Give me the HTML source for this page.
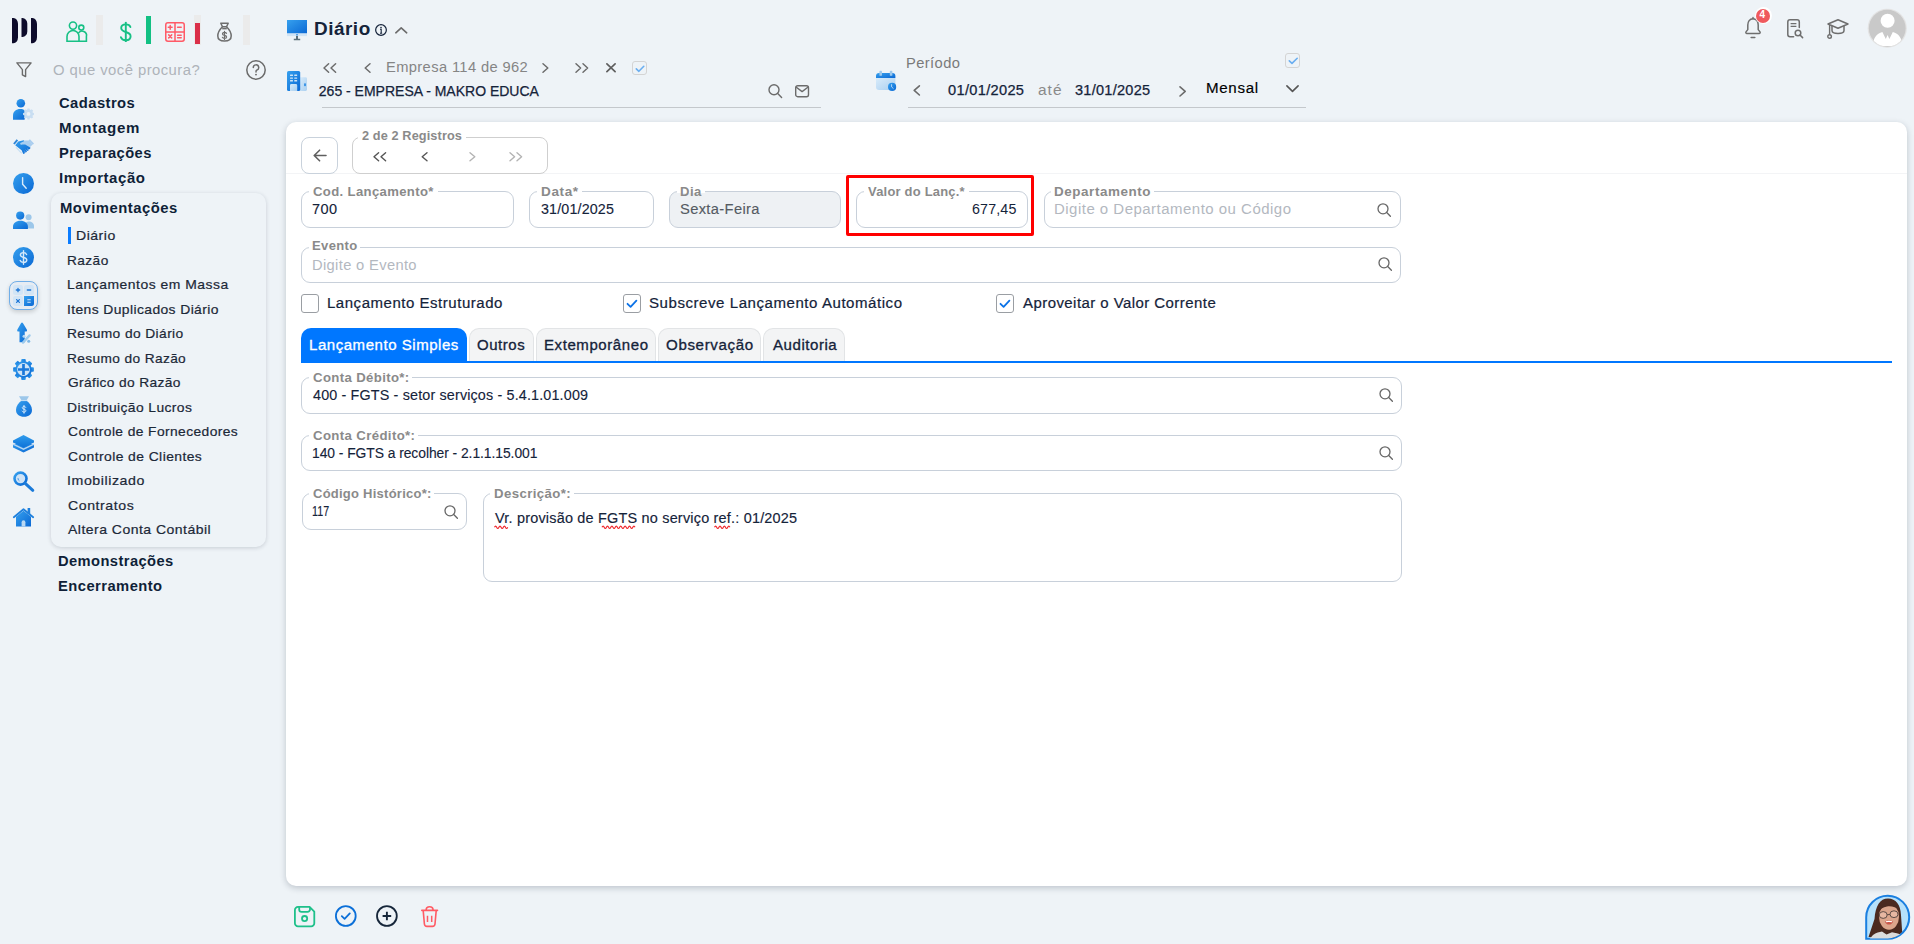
<!DOCTYPE html>
<html><head><meta charset="utf-8"><title>Diário</title>
<style>
html,body{margin:0;padding:0;}
body{width:1914px;height:944px;overflow:hidden;position:relative;background:#eef3f7;font-family:"Liberation Sans",sans-serif;}
.t{position:absolute;white-space:nowrap;}
.a{position:absolute;}
svg{position:absolute;overflow:visible;}
</style></head><body>
<div class="a" style="left:51px;top:192.5px;width:215px;height:354.5px;border-radius:10px;background:#eef3f7;box-shadow:0 1px 4px rgba(30,40,60,0.18);"></div><div class="t" style="left:52.70px;top:63.20px;font-size:14px;line-height:14px;font-weight:normal;color:#aeb3ba;letter-spacing:0.415px;font-family:'Liberation Sans';transform:scaleX(1.0611);transform-origin:0 0;">O que você procura?</div><div class="t" style="left:58.74px;top:96.10px;font-size:14px;line-height:14px;font-weight:bold;color:#0f1f38;letter-spacing:0.429px;font-family:'Liberation Sans';transform:scaleX(1.0536);transform-origin:0 0;">Cadastros</div><div class="t" style="left:58.56px;top:121.00px;font-size:14px;line-height:14px;font-weight:bold;color:#0f1f38;letter-spacing:0.686px;font-family:'Liberation Sans';transform:scaleX(1.0757);transform-origin:0 0;">Montagem</div><div class="t" style="left:58.58px;top:145.90px;font-size:14px;line-height:14px;font-weight:bold;color:#0f1f38;letter-spacing:0.390px;font-family:'Liberation Sans';transform:scaleX(1.0496);transform-origin:0 0;">Preparações</div><div class="t" style="left:58.56px;top:171.10px;font-size:14px;line-height:14px;font-weight:bold;color:#0f1f38;letter-spacing:0.543px;font-family:'Liberation Sans';transform:scaleX(1.0706);transform-origin:0 0;">Importação</div><div class="t" style="left:60.47px;top:201.00px;font-size:14px;line-height:14px;font-weight:bold;color:#0f1f38;letter-spacing:0.480px;font-family:'Liberation Sans';transform:scaleX(1.0589);transform-origin:0 0;">Movimentações</div><div class="t" style="left:58.38px;top:554.40px;font-size:14px;line-height:14px;font-weight:bold;color:#0f1f38;letter-spacing:0.401px;font-family:'Liberation Sans';transform:scaleX(1.0488);transform-origin:0 0;">Demonstrações</div><div class="t" style="left:58.38px;top:579.00px;font-size:14px;line-height:14px;font-weight:bold;color:#0f1f38;letter-spacing:0.427px;font-family:'Liberation Sans';transform:scaleX(1.0533);transform-origin:0 0;">Encerramento</div><div class="a" style="left:68px;top:227px;width:3px;height:17px;background:#0a7cff;"></div><div class="t" style="left:75.80px;top:229.00px;font-size:13px;line-height:13px;font-weight:normal;color:#1c2838;letter-spacing:0.480px;font-family:'Liberation Sans';transform:scaleX(1.0800);transform-origin:0 0;-webkit-text-stroke:0.2px currentColor;">Diário</div><div class="t" style="left:67.33px;top:253.50px;font-size:13px;line-height:13px;font-weight:normal;color:#1c2838;letter-spacing:0.425px;font-family:'Liberation Sans';transform:scaleX(1.0495);transform-origin:0 0;-webkit-text-stroke:0.2px currentColor;">Razão</div><div class="t" style="left:67.31px;top:278.00px;font-size:13px;line-height:13px;font-weight:normal;color:#1c2838;letter-spacing:0.480px;font-family:'Liberation Sans';transform:scaleX(1.0693);transform-origin:0 0;-webkit-text-stroke:0.2px currentColor;">Lançamentos em Massa</div><div class="t" style="left:67.32px;top:302.50px;font-size:13px;line-height:13px;font-weight:normal;color:#1c2838;letter-spacing:0.376px;font-family:'Liberation Sans';transform:scaleX(1.0669);transform-origin:0 0;-webkit-text-stroke:0.2px currentColor;">Itens Duplicados Diário</div><div class="t" style="left:67.32px;top:327.00px;font-size:13px;line-height:13px;font-weight:normal;color:#1c2838;letter-spacing:0.381px;font-family:'Liberation Sans';transform:scaleX(1.0590);transform-origin:0 0;-webkit-text-stroke:0.2px currentColor;">Resumo do Diário</div><div class="t" style="left:67.23px;top:351.50px;font-size:13px;line-height:13px;font-weight:normal;color:#1c2838;letter-spacing:0.373px;font-family:'Liberation Sans';transform:scaleX(1.0517);transform-origin:0 0;-webkit-text-stroke:0.2px currentColor;">Resumo do Razão</div><div class="t" style="left:67.66px;top:376.00px;font-size:13px;line-height:13px;font-weight:normal;color:#1c2838;letter-spacing:0.350px;font-family:'Liberation Sans';transform:scaleX(1.0554);transform-origin:0 0;-webkit-text-stroke:0.2px currentColor;">Gráfico do Razão</div><div class="t" style="left:67.22px;top:400.50px;font-size:13px;line-height:13px;font-weight:normal;color:#1c2838;letter-spacing:0.370px;font-family:'Liberation Sans';transform:scaleX(1.0650);transform-origin:0 0;-webkit-text-stroke:0.2px currentColor;">Distribuição Lucros</div><div class="t" style="left:67.65px;top:425.00px;font-size:13px;line-height:13px;font-weight:normal;color:#1c2838;letter-spacing:0.382px;font-family:'Liberation Sans';transform:scaleX(1.0623);transform-origin:0 0;-webkit-text-stroke:0.2px currentColor;">Controle de Fornecedores</div><div class="t" style="left:67.65px;top:449.50px;font-size:13px;line-height:13px;font-weight:normal;color:#1c2838;letter-spacing:0.392px;font-family:'Liberation Sans';transform:scaleX(1.0682);transform-origin:0 0;-webkit-text-stroke:0.2px currentColor;">Controle de Clientes</div><div class="t" style="left:67.19px;top:474.00px;font-size:13px;line-height:13px;font-weight:normal;color:#1c2838;letter-spacing:0.527px;font-family:'Liberation Sans';transform:scaleX(1.0894);transform-origin:0 0;-webkit-text-stroke:0.2px currentColor;">Imobilizado</div><div class="t" style="left:67.64px;top:498.50px;font-size:13px;line-height:13px;font-weight:normal;color:#1c2838;letter-spacing:0.534px;font-family:'Liberation Sans';transform:scaleX(1.0836);transform-origin:0 0;-webkit-text-stroke:0.2px currentColor;">Contratos</div><div class="t" style="left:68.30px;top:523.00px;font-size:13px;line-height:13px;font-weight:normal;color:#1c2838;letter-spacing:0.443px;font-family:'Liberation Sans';transform:scaleX(1.0778);transform-origin:0 0;-webkit-text-stroke:0.2px currentColor;">Altera Conta Contábil</div><div class="t" style="left:313.52px;top:19.90px;font-size:18px;line-height:18px;font-weight:bold;color:#15233a;letter-spacing:0.485px;font-family:'Liberation Sans';transform:scaleX(1.0517);transform-origin:0 0;">Diário</div><div class="t" style="left:386.35px;top:60.20px;font-size:14px;line-height:14px;font-weight:normal;color:#858585;letter-spacing:0.356px;font-family:'Liberation Sans';transform:scaleX(1.0500);transform-origin:0 0;">Empresa 114 de 962</div><div class="t" style="left:318.84px;top:84.00px;font-size:14px;line-height:14px;font-weight:normal;color:#15233a;letter-spacing:-0.003px;font-family:'Liberation Sans';-webkit-text-stroke:0.25px currentColor;">265 - EMPRESA - MAKRO EDUCA</div><div class="a" style="left:322px;top:107px;width:499px;height:1px;background:#c4c8cc;"></div><div class="t" style="left:905.75px;top:55.80px;font-size:14px;line-height:14px;font-weight:normal;color:#7a7a7a;letter-spacing:0.383px;font-family:'Liberation Sans';transform:scaleX(1.0509);transform-origin:0 0;">Período</div><div class="t" style="left:947.84px;top:82.50px;font-size:14px;line-height:14px;font-weight:normal;color:#15233a;letter-spacing:0.311px;font-family:'Liberation Sans';transform:scaleX(1.0423);transform-origin:0 0;-webkit-text-stroke:0.25px currentColor;">01/01/2025</div><div class="t" style="left:1037.52px;top:82.50px;font-size:14px;line-height:14px;font-weight:normal;color:#8a8a8a;letter-spacing:0.891px;font-family:'Liberation Sans';transform:scaleX(1.1068);transform-origin:0 0;">até</div><div class="t" style="left:1075.45px;top:82.60px;font-size:14px;line-height:14px;font-weight:normal;color:#15233a;letter-spacing:0.270px;font-family:'Liberation Sans';transform:scaleX(1.0365);transform-origin:0 0;-webkit-text-stroke:0.25px currentColor;">31/01/2025</div><div class="t" style="left:1205.72px;top:81.30px;font-size:14px;line-height:14px;font-weight:normal;color:#000000;letter-spacing:0.629px;font-family:'Liberation Sans';transform:scaleX(1.0787);transform-origin:0 0;-webkit-text-stroke:0.15px currentColor;">Mensal</div><div class="a" style="left:908px;top:107px;width:398px;height:1px;background:#c4c8cc;"></div><div class="a" style="left:286px;top:122px;width:1621px;height:764px;background:#fff;border-radius:10px;box-shadow:0 2px 6px rgba(20,30,50,0.22);"></div><div class="a" style="left:286px;top:172.5px;width:1621px;height:1px;background:#f3f4f6;"></div><div class="a" style="left:301px;top:137px;width:36.5px;height:36.5px;border:1px solid #c9d2dc;border-radius:8px;box-sizing:border-box;"></div><div class="a" style="left:352px;top:137px;width:195.7px;height:36.5px;border:1px solid #cfcfcf;border-radius:8px;box-sizing:border-box;"></div><div class="a" style="left:358px;top:135px;width:108px;height:4px;background:#fff;"></div><div class="t" style="left:361.60px;top:130.20px;font-size:12.5px;line-height:12.5px;font-weight:bold;color:#8a8a8a;letter-spacing:0.109px;font-family:'Liberation Sans';transform:scaleX(1.0174);transform-origin:0 0;">2 de 2 Registros</div><div class="a" style="left:301px;top:191px;width:212.79999999999995px;height:36.5px;border:1px solid #c8d0da;border-radius:9px;background:#fff;box-sizing:border-box;"></div><div class="a" style="left:308.8px;top:190px;width:129.2px;height:3px;background:#fff;"></div><div class="t" style="left:312.79px;top:185.70px;font-size:12.5px;line-height:12.5px;font-weight:bold;color:#8a8a8a;letter-spacing:0.338px;font-family:'Liberation Sans';transform:scaleX(1.0486);transform-origin:0 0;">Cod. Lançamento*</div><div class="t" style="left:312.32px;top:201.90px;font-size:14px;line-height:14px;font-weight:normal;color:#15233a;letter-spacing:0.397px;font-family:'Liberation Sans';transform:scaleX(1.0368);transform-origin:0 0;-webkit-text-stroke:0.12px currentColor;">700</div><div class="a" style="left:529.2px;top:191px;width:124.39999999999998px;height:36.5px;border:1px solid #c8d0da;border-radius:9px;background:#fff;box-sizing:border-box;"></div><div class="a" style="left:537px;top:190px;width:45px;height:3px;background:#fff;"></div><div class="t" style="left:540.85px;top:185.70px;font-size:12.5px;line-height:12.5px;font-weight:bold;color:#8a8a8a;letter-spacing:0.590px;font-family:'Liberation Sans';transform:scaleX(1.0818);transform-origin:0 0;">Data*</div><div class="t" style="left:540.85px;top:201.90px;font-size:14px;line-height:14px;font-weight:normal;color:#15233a;letter-spacing:0.154px;font-family:'Liberation Sans';transform:scaleX(1.0205);transform-origin:0 0;-webkit-text-stroke:0.12px currentColor;">31/01/2025</div><div class="a" style="left:669.2px;top:191px;width:171.39999999999998px;height:36.5px;border:1px solid #c8d0da;border-radius:9px;background:#eef1f4;box-sizing:border-box;"></div><div class="a" style="left:677px;top:190px;width:28px;height:3px;background:#fff;"></div><div class="t" style="left:679.88px;top:185.70px;font-size:12.5px;line-height:12.5px;font-weight:bold;color:#8a8a8a;letter-spacing:0.418px;font-family:'Liberation Sans';transform:scaleX(1.0467);transform-origin:0 0;">Dia</div><div class="t" style="left:680.24px;top:201.90px;font-size:14px;line-height:14px;font-weight:normal;color:#555b63;letter-spacing:0.338px;font-family:'Liberation Sans';transform:scaleX(1.0492);transform-origin:0 0;-webkit-text-stroke:0.12px currentColor;">Sexta-Feira</div><div class="a" style="left:846px;top:175px;width:188px;height:61px;border:3px solid #ff0000;border-radius:2px;box-sizing:border-box;"></div><div class="a" style="left:856.2px;top:191px;width:171.5999999999999px;height:36.5px;border:1px solid #c8d0da;border-radius:9px;background:#fff;box-sizing:border-box;"></div><div class="a" style="left:864px;top:190px;width:105px;height:3px;background:#fff;"></div><div class="t" style="left:868.30px;top:185.70px;font-size:12.5px;line-height:12.5px;font-weight:bold;color:#8a8a8a;letter-spacing:0.217px;font-family:'Liberation Sans';transform:scaleX(1.0348);transform-origin:0 0;">Valor do Lanç.*</div><div class="t" style="left:971.53px;top:201.90px;font-size:14px;line-height:14px;font-weight:normal;color:#15233a;letter-spacing:0.148px;font-family:'Liberation Sans';transform:scaleX(1.0181);transform-origin:0 0;">677,45</div><div class="a" style="left:1043.5px;top:191px;width:357.0px;height:36.5px;border:1px solid #c8d0da;border-radius:9px;background:#fff;box-sizing:border-box;"></div><div class="a" style="left:1051px;top:190px;width:103px;height:3px;background:#fff;"></div><div class="t" style="left:1053.96px;top:185.70px;font-size:12.5px;line-height:12.5px;font-weight:bold;color:#8a8a8a;letter-spacing:0.526px;font-family:'Liberation Sans';transform:scaleX(1.0751);transform-origin:0 0;">Departamento</div><div class="t" style="left:1053.63px;top:201.90px;font-size:14px;line-height:14px;font-weight:normal;color:#b3b8bf;letter-spacing:0.453px;font-family:'Liberation Sans';transform:scaleX(1.0705);transform-origin:0 0;">Digite o Departamento ou Código</div><div class="a" style="left:301px;top:246.5px;width:1099.5px;height:36.0px;border:1px solid #c8d0da;border-radius:9px;background:#fff;box-sizing:border-box;"></div><div class="a" style="left:308.8px;top:245.5px;width:51.19999999999999px;height:3px;background:#fff;"></div><div class="t" style="left:311.88px;top:239.80px;font-size:12.5px;line-height:12.5px;font-weight:bold;color:#8a8a8a;letter-spacing:0.337px;font-family:'Liberation Sans';transform:scaleX(1.0434);transform-origin:0 0;">Evento</div><div class="t" style="left:311.55px;top:257.50px;font-size:14px;line-height:14px;font-weight:normal;color:#b3b8bf;letter-spacing:0.323px;font-family:'Liberation Sans';transform:scaleX(1.0510);transform-origin:0 0;">Digite o Evento</div><div class="a" style="left:301px;top:294px;width:18px;height:18.5px;border:1px solid #9a9ea3;border-radius:3px;box-sizing:border-box;"></div><div class="t" style="left:326.73px;top:296.20px;font-size:14px;line-height:14px;font-weight:normal;color:#15233a;letter-spacing:0.487px;font-family:'Liberation Sans';transform:scaleX(1.0724);transform-origin:0 0;-webkit-text-stroke:0.2px currentColor;">Lançamento Estruturado</div><div class="a" style="left:623px;top:294px;width:18px;height:18.5px;border:1px solid #9a9ea3;border-radius:3px;box-sizing:border-box;"></div><div class="t" style="left:648.73px;top:296.20px;font-size:14px;line-height:14px;font-weight:normal;color:#15233a;letter-spacing:0.509px;font-family:'Liberation Sans';transform:scaleX(1.0745);transform-origin:0 0;-webkit-text-stroke:0.2px currentColor;">Subscreve Lançamento Automático</div><div class="a" style="left:996px;top:294px;width:18px;height:18.5px;border:1px solid #9a9ea3;border-radius:3px;box-sizing:border-box;"></div><div class="t" style="left:1022.90px;top:296.20px;font-size:14px;line-height:14px;font-weight:normal;color:#15233a;letter-spacing:0.419px;font-family:'Liberation Sans';transform:scaleX(1.0690);transform-origin:0 0;-webkit-text-stroke:0.2px currentColor;">Aproveitar o Valor Corrente</div><div class="a" style="left:301px;top:361px;width:1591px;height:2px;background:#0077ff;"></div><div class="a" style="left:301px;top:328px;width:166px;height:34px;background:#0077ff;border-radius:10px 10px 0 0;"></div><div class="t" style="left:309.23px;top:338.00px;font-size:14px;line-height:14px;font-weight:normal;color:#ffffff;letter-spacing:0.508px;font-family:'Liberation Sans';transform:scaleX(1.0716);transform-origin:0 0;-webkit-text-stroke:0.3px currentColor;">Lançamento Simples</div><div class="a" style="left:469.4px;top:328.3px;width:64.30000000000007px;height:33px;background:#f3f4f5;border:1px solid #e2e4e6;border-bottom:none;border-radius:10px 10px 0 0;box-sizing:border-box;"></div><div class="t" style="left:477.20px;top:338.00px;font-size:14px;line-height:14px;font-weight:normal;color:#15233a;letter-spacing:0.522px;font-family:'Liberation Sans';transform:scaleX(1.0682);transform-origin:0 0;-webkit-text-stroke:0.3px currentColor;">Outros</div><div class="a" style="left:536px;top:328.3px;width:119.5px;height:33px;background:#f3f4f5;border:1px solid #e2e4e6;border-bottom:none;border-radius:10px 10px 0 0;box-sizing:border-box;"></div><div class="t" style="left:543.53px;top:338.00px;font-size:14px;line-height:14px;font-weight:normal;color:#15233a;letter-spacing:0.543px;font-family:'Liberation Sans';transform:scaleX(1.0716);transform-origin:0 0;-webkit-text-stroke:0.3px currentColor;">Extemporâneo</div><div class="a" style="left:658.4px;top:328.3px;width:102.30000000000007px;height:33px;background:#f3f4f5;border:1px solid #e2e4e6;border-bottom:none;border-radius:10px 10px 0 0;box-sizing:border-box;"></div><div class="t" style="left:665.89px;top:338.00px;font-size:14px;line-height:14px;font-weight:normal;color:#15233a;letter-spacing:0.595px;font-family:'Liberation Sans';transform:scaleX(1.0777);transform-origin:0 0;-webkit-text-stroke:0.3px currentColor;">Observação</div><div class="a" style="left:763.1px;top:328.3px;width:81.60000000000002px;height:33px;background:#f3f4f5;border:1px solid #e2e4e6;border-bottom:none;border-radius:10px 10px 0 0;box-sizing:border-box;"></div><div class="t" style="left:772.80px;top:338.00px;font-size:14px;line-height:14px;font-weight:normal;color:#15233a;letter-spacing:0.491px;font-family:'Liberation Sans';transform:scaleX(1.0764);transform-origin:0 0;-webkit-text-stroke:0.3px currentColor;">Auditoria</div><div class="a" style="left:301.2px;top:377px;width:1100.3999999999999px;height:36.5px;border:1px solid #c8d0da;border-radius:9px;background:#fff;box-sizing:border-box;"></div><div class="a" style="left:308.8px;top:376px;width:103.19999999999999px;height:3px;background:#fff;"></div><div class="t" style="left:312.69px;top:372.20px;font-size:12.5px;line-height:12.5px;font-weight:bold;color:#8a8a8a;letter-spacing:0.340px;font-family:'Liberation Sans';transform:scaleX(1.0546);transform-origin:0 0;">Conta Débito*:</div><div class="t" style="left:312.78px;top:388.20px;font-size:14px;line-height:14px;font-weight:normal;color:#15233a;letter-spacing:0.152px;font-family:'Liberation Sans';transform:scaleX(1.0244);transform-origin:0 0;-webkit-text-stroke:0.12px currentColor;">400 - FGTS - setor serviços - 5.4.1.01.009</div><div class="a" style="left:301.2px;top:435.1px;width:1100.3999999999999px;height:36.19999999999999px;border:1px solid #c8d0da;border-radius:9px;background:#fff;box-sizing:border-box;"></div><div class="a" style="left:308.8px;top:434.1px;width:109.19999999999999px;height:3px;background:#fff;"></div><div class="t" style="left:312.69px;top:430.30px;font-size:12.5px;line-height:12.5px;font-weight:bold;color:#8a8a8a;letter-spacing:0.347px;font-family:'Liberation Sans';transform:scaleX(1.0569);transform-origin:0 0;">Conta Crédito*:</div><div class="t" style="left:312.13px;top:445.90px;font-size:14px;line-height:14px;font-weight:normal;color:#15233a;letter-spacing:-0.059px;font-family:'Liberation Sans';transform:scaleX(0.9910);transform-origin:0 0;-webkit-text-stroke:0.12px currentColor;">140 - FGTS a recolher - 2.1.1.15.001</div><div class="a" style="left:301.8px;top:493px;width:165.7px;height:36.700000000000045px;border:1px solid #c8d0da;border-radius:9px;background:#fff;box-sizing:border-box;"></div><div class="a" style="left:308.8px;top:492px;width:125.19999999999999px;height:3px;background:#fff;"></div><div class="t" style="left:313.09px;top:487.70px;font-size:12.5px;line-height:12.5px;font-weight:bold;color:#8a8a8a;letter-spacing:0.241px;font-family:'Liberation Sans';transform:scaleX(1.0393);transform-origin:0 0;">Código Histórico*:</div><div class="t" style="left:312.33px;top:503.90px;font-size:14px;line-height:14px;font-weight:normal;color:#15233a;letter-spacing:0.000px;font-family:'Liberation Sans';transform:scaleX(0.7664);transform-origin:0 0;-webkit-text-stroke:0.15px currentColor;">117</div><div class="a" style="left:483.3px;top:492.8px;width:918.3px;height:89.49999999999994px;border:1px solid #c8d0da;border-radius:9px;background:#fff;box-sizing:border-box;"></div><div class="a" style="left:490px;top:491.8px;width:84px;height:3px;background:#fff;"></div><div class="t" style="left:493.87px;top:487.70px;font-size:12.5px;line-height:12.5px;font-weight:bold;color:#8a8a8a;letter-spacing:0.366px;font-family:'Liberation Sans';transform:scaleX(1.0577);transform-origin:0 0;">Descrição*:</div><div class="t" style="left:494.70px;top:511.00px;font-size:14px;line-height:14px;font-weight:normal;color:#15233a;letter-spacing:0.196px;font-family:'Liberation Sans';transform:scaleX(1.0313);transform-origin:0 0;-webkit-text-stroke:0.15px currentColor;">Vr. provisão de FGTS no serviço ref.: 01/2025</div><svg width="0" height="0" style="left:0;top:0"><defs><linearGradient id="gb" x1="0" y1="0" x2="1" y2="1"><stop offset="0" stop-color="#36a0ee"/><stop offset="1" stop-color="#0a68d4"/></linearGradient><linearGradient id="gl" x1="0" y1="0" x2="1" y2="1"><stop offset="0" stop-color="#d8ebfa"/><stop offset="1" stop-color="#a9cff0"/></linearGradient><linearGradient id="gm" x1="0" y1="0" x2="0" y2="1"><stop offset="0" stop-color="#2f9cec"/><stop offset="1" stop-color="#0f72d8"/></linearGradient></defs></svg><svg style="left:12px;top:17.8px;" width="26" height="26" viewBox="0 0 26 26"><path d="M0 0H1.5A4.5 6 0 0 1 6 6V19.2A4.5 6 0 0 1 1.5 25.2H0Z" fill="#0d0b2b"/><path d="M9.5 0H10.5A5 5.5 0 0 1 15.3 5.5V13.5A5 5.5 0 0 1 10.5 19H9.5Z" fill="#0d0b2b"/><path d="M19 0H20.5A4.5 6 0 0 1 25 6V19.2A4.5 6 0 0 1 20.5 25.2H19Z" fill="#0d0b2b"/></svg><svg style="left:66px;top:21px;" width="22" height="22" viewBox="0 0 22 22"><g fill="none" stroke="#17c085" stroke-width="1.6"><circle cx="7" cy="4.6" r="3.6"/><circle cx="15.3" cy="6.6" r="2.5"/><path d="M1 20.2V15.5A6 6 0 0 1 13 15.5V20.2Z"/><path d="M12.4 12.2A4.4 4.4 0 0 1 20.4 15.6V20.2H13"/></g></svg><div class="a" style="left:96px;top:15px;width:7px;height:29.5px;background:#ebebeb;"></div><svg style="left:119px;top:21px;" width="14" height="22" viewBox="0 0 14 22"><g fill="none" stroke="#17c085" stroke-width="1.9"><path d="M11.4 6C10.8 4.3 9 3.4 6.8 3.4C4.2 3.4 2.2 4.8 2.2 7C2.2 12.2 11.6 9.8 11.6 15.2C11.6 17.6 9.6 19.2 6.8 19.2C4.4 19.2 2.5 18.1 1.9 16.2" stroke-linecap="round"/><path d="M6.8 0.9V21"/></g></svg><div class="a" style="left:146px;top:16px;width:5px;height:27.8px;background:#12c083;"></div><svg style="left:165px;top:22px;" width="20" height="20" viewBox="0 0 20 20"><g fill="none" stroke="#ff5a67" stroke-width="1.5"><rect x="0.75" y="0.75" width="18.5" height="18.5" rx="2.2"/><path d="M10 1V19M1 10H19"/></g><g stroke="#ff5a67" stroke-width="1.5" stroke-linecap="round"><path d="M3.3 5.3H7.1M5.2 3.4V7.2M12.6 5.3H16.2M3.7 12.9L6.7 15.9M6.7 12.9L3.7 15.9M12.6 13.2H16.2M12.6 15.7H16.2"/></g></svg><div class="a" style="left:194px;top:15px;width:7px;height:29.5px;background:#ebebeb;"></div><div class="a" style="left:195px;top:23px;width:5px;height:21px;background:#da2f49;"></div><svg style="left:216.5px;top:22px;" width="15" height="20" viewBox="0 0 15 20"><g fill="none" stroke="#6e6e6e" stroke-width="1.5" stroke-linejoin="round"><path d="M3.8 1.2H11.2L9.5 4.8H5.5Z"/><path d="M5.5 4.8C2.6 7.6 0.8 10.8 0.8 14C0.8 17.6 3.6 19 7.5 19C11.4 19 14.2 17.6 14.2 14C14.2 10.8 12.4 7.6 9.5 4.8"/><path d="M5.2 6.6H9.8"/></g><path d="M9.5 11.3C9.1 10.7 8.4 10.4 7.5 10.4C6.3 10.4 5.5 11 5.5 11.9C5.5 13.8 9.6 12.9 9.6 14.9C9.6 15.8 8.7 16.4 7.5 16.4C6.5 16.4 5.7 16 5.4 15.3M7.5 9.4V17.4" fill="none" stroke="#6e6e6e" stroke-width="1.2" stroke-linecap="round"/></svg><div class="a" style="left:243px;top:15px;width:7px;height:29.5px;background:#ebebeb;"></div><svg style="left:16px;top:62px;" width="16" height="16" viewBox="0 0 16 16"><path d="M0.9 0.9H15.1L9.6 7.6V14.6L6.4 12.9V7.6Z" fill="none" stroke="#6a6a6a" stroke-width="1.4" stroke-linejoin="round"/></svg><svg style="left:246px;top:60px;" width="20" height="20" viewBox="0 0 20 20"><circle cx="10" cy="10" r="9.2" fill="none" stroke="#6a6a6a" stroke-width="1.5"/><path d="M7.3 7.6A2.7 2.7 0 1 1 10.6 10.2C10 10.5 10 11 10 12" fill="none" stroke="#6a6a6a" stroke-width="1.5" stroke-linecap="round"/><circle cx="10" cy="14.6" r="0.95" fill="#6a6a6a"/></svg><svg style="left:12px;top:98px;" width="24" height="22" viewBox="0 0 24 22"><circle cx="8.8" cy="5.2" r="4.3" fill="url(#gb)"/><path d="M1 21.7V17.5C1 13.5 4 11 8.5 11C10.5 11 12 11.6 13.2 12.5L12.6 21.7Z" fill="url(#gb)"/><g transform="translate(16.5 16.3)"><path d="M-1.3 -5.6H1.3L1.6 -4.1L2.9 -3.5L4.2 -4.4L6 -2.6L5.1 -1.3L5.6 0L7 0.3V2.7L5.6 3L5.1 4.3L6 5.6L4.2 7.4L2.9 6.5L1.6 7.1L1.3 8.5H-1.3L-1.6 7.1L-2.9 6.5L-4.2 7.4L-6 5.6L-5.1 4.3L-5.6 3L-7 2.7V0.3L-5.6 0L-5.1 -1.3L-6 -2.6L-4.2 -4.4L-2.9 -3.5L-1.6 -4.1Z" transform="translate(0 -1.5) scale(0.78)" fill="#c9def2"/><circle cx="0" cy="-0.35" r="1.9" fill="#eef3f7"/></g></svg><svg style="left:13px;top:139px;" width="22" height="16" viewBox="0 0 22 16"><path d="M0.2 4.4L3.6 0.2L5.1 1.4L1.7 5.6Z" fill="#2f86d8"/><path d="M16.9 0.2L21 4.4L19.8 5.7L15.6 1.5Z" fill="#a9cdef"/><path d="M6.6 3.4L10.5 1.4L16.2 1.6L19.6 5.4L14.6 10.4L10 6.6Z" fill="#a9cdef"/><path d="M3.2 8.6L5.6 10.8M4.8 10.4L7 12.4M6.4 12L8.4 13.8" stroke="#c5dff4" stroke-width="1.1" stroke-linecap="round"/><path d="M2.2 6.3L5.3 2.4L10.8 1.3L11 2.3L7.4 3.9L7.6 5.4L12.2 5.5L17.6 8.8L16.8 10.3L15.4 9.9L15.8 11.2L14.2 12.1L13.6 11.2L13.9 12.8L12.5 13.7L11.9 12.6L11.7 14.4L10.3 14.9L8.6 11.2Z" fill="url(#gb)"/><path d="M14 9.6L15.2 10.6M12.6 10.6L13.8 11.8M11.2 11.6L12.2 12.9" stroke="#8fc0ec" stroke-width="0.6"/></svg><svg style="left:13px;top:173px;" width="21" height="21" viewBox="0 0 21 21"><circle cx="10.5" cy="10.5" r="10.5" fill="url(#gb)"/><path d="M9.6 4.6V11.2L13.2 15.2" fill="none" stroke="#dcecfa" stroke-width="1.4" stroke-linecap="round"/></svg><svg style="left:13px;top:211px;" width="22" height="19" viewBox="0 0 22 19"><circle cx="15.6" cy="6.2" r="3" fill="#9cc7ea"/><path d="M11.6 17.6V14.6C11.6 12 13.4 10.6 15.8 10.6C18.8 10.6 21 12.4 21 15.2V17.6Z" fill="#9cc7ea"/><circle cx="7.2" cy="4.6" r="4.1" fill="url(#gb)"/><path d="M0 18V15.6C0 12.2 3 9.8 7.4 9.8C11.8 9.8 14.9 12.2 14.9 15.6V18Z" fill="url(#gb)"/></svg><svg style="left:13px;top:246.7px;" width="21" height="21" viewBox="0 0 21 21"><circle cx="10.5" cy="10.5" r="10.5" fill="url(#gb)"/><g fill="none" stroke="#d6e9fa" stroke-width="1.4" stroke-linecap="round"><path d="M13.6 7.6C13.2 6.4 12 5.6 10.5 5.6C8.6 5.6 7.4 6.6 7.4 8C7.4 11.2 13.8 9.8 13.8 13C13.8 14.5 12.4 15.4 10.5 15.4C8.8 15.4 7.6 14.7 7.2 13.5"/><path d="M10.5 3.8V17.2"/></g></svg><div class="a" style="left:9px;top:281px;width:28.7px;height:28.8px;border:1px solid #70aee8;border-radius:8px;box-sizing:border-box;background:#e6ecf3;box-shadow:0 2px 4px rgba(0,0,0,0.16);"></div><svg style="left:13.2px;top:285px;" width="21" height="21" viewBox="0 0 21 21"><rect x="0" y="0" width="10" height="10" rx="2.5" fill="#d2e5f6"/><rect x="11" y="0" width="10" height="10" rx="2.5" fill="#d2e5f6"/><rect x="0" y="11" width="10" height="10" rx="2.5" fill="#d2e5f6"/><path d="M11 11H21V18.5A2.5 2.5 0 0 1 18.5 21H11Z" fill="url(#gb)"/><g stroke="#1d76d6" stroke-width="1.3" stroke-linecap="round"><path d="M3.3 5H6.7M5 3.3V6.7M14.3 5H17.7M3.6 14.6L6.4 17.4M6.4 14.6L3.6 17.4"/></g><path d="M14.3 14.8H17.7M14.3 17.2H17.7" stroke="#d6e8f8" stroke-width="1.1"/></svg><svg style="left:16.5px;top:321.5px;" width="14" height="22" viewBox="0 0 14 22"><path d="M0.6 9.4Q-0.2 8.6 0.4 7.6L4 1.2Q5 -0.3 6 1.2L9.8 7.6Q10.4 8.6 9.6 9.4H7.7V20.2H2.5V9.4Z" fill="url(#gb)"/><path d="M12.6 13.4L6 20.6" stroke="#9fcbec" stroke-width="2.3" stroke-linecap="round"/><circle cx="7" cy="14.3" r="1.5" fill="#b9d8f1"/><circle cx="11.7" cy="19.3" r="1.5" fill="#7fb8e6"/></svg><svg style="left:13px;top:359px;" width="21" height="21" viewBox="0 0 21 21"><g transform="translate(10.5 10.5)"><g fill="url(#gb)"><rect x="-2.25" y="-10.4" width="4.5" height="5" rx="0.9" transform="rotate(0)"/><rect x="-2.25" y="-10.4" width="4.5" height="5" rx="0.9" transform="rotate(45)"/><rect x="-2.25" y="-10.4" width="4.5" height="5" rx="0.9" transform="rotate(90)"/><rect x="-2.25" y="-10.4" width="4.5" height="5" rx="0.9" transform="rotate(135)"/><rect x="-2.25" y="-10.4" width="4.5" height="5" rx="0.9" transform="rotate(180)"/><rect x="-2.25" y="-10.4" width="4.5" height="5" rx="0.9" transform="rotate(225)"/><rect x="-2.25" y="-10.4" width="4.5" height="5" rx="0.9" transform="rotate(270)"/><rect x="-2.25" y="-10.4" width="4.5" height="5" rx="0.9" transform="rotate(315)"/></g><circle r="8.3" fill="url(#gb)"/><circle r="6.4" fill="#cfe4f6"/><path d="M0 -5.6V5.6M-5.6 0H5.6" stroke="#1a78da" stroke-width="2.7"/></g></svg><svg style="left:15.8px;top:395.8px;" width="16" height="21" viewBox="0 0 16 21"><path d="M3 0.2H13L10.6 4.2H5.4Z" fill="#9cc7ea"/><path d="M5.6 4.4C2.4 6.8 0 10 0 14C0 18.4 3.4 20.8 8 20.8C12.6 20.8 16 18.4 16 14C16 10 13.6 6.8 10.4 4.4Z" fill="url(#gb)"/><path d="M4.6 4.6H11.4" stroke="#c9e0f4" stroke-width="1"/><path d="M9.8 11.4C9.5 10.8 8.9 10.5 8 10.5C7 10.5 6.3 11 6.3 11.8C6.3 13.6 9.9 12.8 9.9 14.7C9.9 15.6 9.1 16.1 8 16.1C7.1 16.1 6.4 15.7 6.1 15.1M8 9.4V17.2" fill="none" stroke="#d6e9fa" stroke-width="1" stroke-linecap="round"/></svg><svg style="left:12.9px;top:434.5px;" width="21" height="18" viewBox="0 0 21 18"><path d="M10.5 5.2L21 10.2V12.4L10.5 17.4L0 12.4V10.2Z" fill="url(#gb)"/><path d="M0 9.2L10.5 14.2L21 9.2" fill="none" stroke="#b5d5f2" stroke-width="1.4"/><path d="M10.5 0L21 5.4V7.6L10.5 12.6L0 7.6V5.4Z" fill="url(#gm)"/></svg><svg style="left:13px;top:469.5px;" width="22" height="22" viewBox="0 0 22 22"><circle cx="7.5" cy="8.6" r="5.6" fill="#cfe3f6"/><circle cx="7.5" cy="8.6" r="6" fill="none" stroke="url(#gb)" stroke-width="2.6"/><path d="M12.2 13.3L19.8 20.3" stroke="#1b7ad9" stroke-width="3" stroke-linecap="round"/><path d="M5 8.2A2.8 2.8 0 0 0 6.4 10.8" fill="none" stroke="#1b7ad9" stroke-width="0.8"/></svg><svg style="left:12.9px;top:508px;" width="21" height="19" viewBox="0 0 21 19"><path d="M3 8.8L10.5 2.8L18 8.8V18.4H3Z" fill="url(#gb)"/><path d="M0.8 9.2L10.5 1.2L20.2 9.2" fill="none" stroke="#1f80dd" stroke-width="1.8" stroke-linejoin="round" stroke-linecap="round"/><rect x="14.6" y="0" width="2.6" height="6" fill="#1f80dd"/><path d="M8.6 18.4V14.2A1.9 1.9 0 0 1 12.4 14.2V18.4Z" fill="#b9d8f3"/></svg><svg style="left:287px;top:19.9px;" width="20" height="21" viewBox="0 0 20 21"><rect x="0" y="0" width="20" height="13.5" fill="url(#gb)"/><rect x="0" y="13.5" width="20" height="2.6" fill="#cfe3f5"/><rect x="9" y="14.2" width="2" height="1.2" fill="#3f95e0"/><path d="M9 16.1H11V18.8H13.2V20.2H6.8V18.8H9Z" fill="#5b6f7a"/></svg><svg style="left:375px;top:24px;" width="12" height="12" viewBox="0 0 12 12"><circle cx="6" cy="6" r="5.35" fill="none" stroke="#15233a" stroke-width="1.2"/><circle cx="6" cy="3.6" r="0.8" fill="#15233a"/><path d="M5 5.3H6.2V9.2M5 9.2H7.2" fill="none" stroke="#15233a" stroke-width="1.1"/></svg><svg style="left:394.8px;top:27px;" width="12.5" height="6.5" viewBox="0 0 12.5 6.5"><path d="M0.8 5.8L6.2 0.8L11.7 5.8" fill="none" stroke="#6b6b6b" stroke-width="1.6" stroke-linecap="round" stroke-linejoin="round"/></svg><svg style="left:287px;top:70.9px;" width="20" height="20" viewBox="0 0 20 20"><path d="M13 6.3H18.6A1.4 1.4 0 0 1 20 7.7V18.6A1.4 1.4 0 0 1 18.6 20H13Z" fill="url(#gl)"/><rect x="17" y="12.2" width="2" height="3" rx="0.8" fill="#3d95e6"/><rect x="0" y="0" width="13.2" height="20" rx="1.6" fill="url(#gb)"/><g fill="#cfe4f6"><rect x="3" y="3.6" width="3" height="1.3" rx="0.5"/><rect x="7.2" y="3.6" width="3" height="1.3" rx="0.5"/><rect x="3" y="6.4" width="3" height="1.3" rx="0.5"/><rect x="7.2" y="6.4" width="3" height="1.3" rx="0.5"/><rect x="3" y="9.1" width="3" height="1.3" rx="0.5"/><rect x="7.2" y="9.1" width="3" height="1.3" rx="0.5"/></g><path d="M3 20V14.4A1.4 1.4 0 0 1 4.4 13H8.8A1.4 1.4 0 0 1 10.2 14.4V20Z" fill="url(#gl)"/></svg><svg style="left:323.2px;top:63.2px;" width="14" height="10" viewBox="0 0 14 10"><path d="M5.6 0.8L1 5L5.6 9.2M12.6 0.8L8 5L12.6 9.2" fill="none" stroke="#6b6b6b" stroke-width="1.5" stroke-linecap="round" stroke-linejoin="round"/></svg><svg style="left:363.7px;top:63.2px;" width="7" height="10" viewBox="0 0 7 10"><path d="M6 0.8L1.2 5L6 9.2" fill="none" stroke="#6b6b6b" stroke-width="1.5" stroke-linecap="round" stroke-linejoin="round"/></svg><svg style="left:541.5px;top:63.2px;" width="7" height="10" viewBox="0 0 7 10"><path d="M1 0.8L5.8 5L1 9.2" fill="none" stroke="#6b6b6b" stroke-width="1.5" stroke-linecap="round" stroke-linejoin="round"/></svg><svg style="left:575px;top:63.2px;" width="14" height="10" viewBox="0 0 14 10"><path d="M1 0.8L5.6 5L1 9.2M8 0.8L12.6 5L8 9.2" fill="none" stroke="#6b6b6b" stroke-width="1.5" stroke-linecap="round" stroke-linejoin="round"/></svg><svg style="left:606px;top:63.3px;" width="10" height="9.5" viewBox="0 0 10 9.5"><path d="M0.9 0.9L9.1 8.6M9.1 0.9L0.9 8.6" fill="none" stroke="#5e5e5e" stroke-width="1.7" stroke-linecap="round" stroke-linejoin="round"/></svg><div class="a" style="left:632.2px;top:61.3px;width:14.6px;height:14.2px;border:1px solid #d4d4d4;border-radius:3px;box-sizing:border-box;"></div><svg style="left:634.5px;top:64.5px;" width="10" height="8" viewBox="0 0 10 8"><path d="M1.3 3.8L3.9 6.3L8.8 1.3" fill="none" stroke="#6aaef0" stroke-width="1.6" stroke-linecap="round" stroke-linejoin="round"/></svg><svg style="left:768px;top:84.2px;" width="15" height="14" viewBox="0 0 15 14"><circle cx="6" cy="5.8" r="5" fill="none" stroke="#6b6b6b" stroke-width="1.4"/><path d="M9.7 9.5L13.6 13.4" stroke="#6b6b6b" stroke-width="1.4" stroke-linecap="round"/></svg><svg style="left:794.9px;top:84.8px;" width="14.2" height="12.4" viewBox="0 0 14.2 12.4"><rect x="0.7" y="0.7" width="12.8" height="11" rx="2" fill="none" stroke="#6b6b6b" stroke-width="1.4"/><path d="M1 2L7.1 6.6L13.2 2" fill="none" stroke="#6b6b6b" stroke-width="1.4" stroke-linejoin="round"/></svg><svg style="left:875.9px;top:71px;" width="20.5" height="20.5" viewBox="0 0 20.5 20.5"><path d="M0 5A3 3 0 0 1 3 2H16.4A3 3 0 0 1 19.4 5V7.1H0Z" fill="url(#gb)"/><path d="M0 7.1H19.4V16.1A3 3 0 0 1 16.4 19.1H3A3 3 0 0 1 0 16.1Z" fill="url(#gl)"/><rect x="3.4" y="-0.2" width="2.6" height="5" rx="0.9" fill="#9dc8ec"/><rect x="13.8" y="-0.2" width="2.6" height="5" rx="0.9" fill="#9dc8ec"/><circle cx="16.1" cy="15.9" r="4.1" fill="url(#gb)"/><path d="M15.6 13.6V15.9L17.2 17.4" fill="none" stroke="#d6e9fa" stroke-width="0.8" stroke-linecap="round"/></svg><svg style="left:912.9px;top:85.3px;" width="7.5" height="11" viewBox="0 0 7.5 11"><path d="M6.4 0.8L1.2 5.4L6.4 10" fill="none" stroke="#6b6b6b" stroke-width="1.6" stroke-linecap="round" stroke-linejoin="round"/></svg><svg style="left:1179px;top:85.5px;" width="7.5" height="11" viewBox="0 0 7.5 11"><path d="M1 0.8L6.2 5.4L1 10" fill="none" stroke="#6b6b6b" stroke-width="1.6" stroke-linecap="round" stroke-linejoin="round"/></svg><svg style="left:1286px;top:84.8px;" width="13" height="7.5" viewBox="0 0 13 7.5"><path d="M0.9 0.9L6.5 6.4L12.1 0.9" fill="none" stroke="#555" stroke-width="1.6" stroke-linecap="round" stroke-linejoin="round"/></svg><div class="a" style="left:1285.3px;top:53.1px;width:15.2px;height:14.8px;border:1px solid #d4d4d4;border-radius:3px;box-sizing:border-box;"></div><svg style="left:1287.8px;top:56.5px;" width="10.5" height="8" viewBox="0 0 10.5 8"><path d="M1.3 3.9L4 6.4L9.2 1.3" fill="none" stroke="#6aaef0" stroke-width="1.6" stroke-linecap="round" stroke-linejoin="round"/></svg><svg style="left:1744.5px;top:15.5px;" width="16" height="23" viewBox="0 0 16 23"><path d="M8 1.5V2.8" stroke="#6e6e6e" stroke-width="1.4" stroke-linecap="round"/><path d="M8 2.8C4.6 2.8 2.8 5.6 2.8 9V13.6L1 15.9A1.1 1.1 0 0 0 1.9 17.6H14.1A1.1 1.1 0 0 0 15 15.9L13.2 13.6V9C13.2 5.6 11.4 2.8 8 2.8Z" fill="none" stroke="#6e6e6e" stroke-width="1.5" stroke-linejoin="round"/><path d="M6.2 21.5H9.8" stroke="#6e6e6e" stroke-width="1.6" stroke-linecap="round"/></svg><div class="a" style="left:1754.6px;top:7px;width:17.4px;height:17.4px;border-radius:50%;background:#fff;"></div><div class="a" style="left:1756.2px;top:8.6px;width:14.2px;height:14.2px;border-radius:50%;background:#ef5a5e;"></div><div class="t" style="left:1759.6px;top:9.4px;font:bold 10px/12px 'Liberation Sans';color:#fff;">4</div><svg style="left:1786.5px;top:18.5px;" width="18" height="19" viewBox="0 0 18 19"><path d="M12.3 8.6V3A2.2 2.2 0 0 0 10.1 0.8H3A2.2 2.2 0 0 0 0.8 3V15.6A2.2 2.2 0 0 0 3 17.8H6.6" fill="none" stroke="#6e6e6e" stroke-width="1.5" stroke-linecap="round"/><path d="M3.6 4.6H9.4M3.6 7.4H9.4" stroke="#6e6e6e" stroke-width="1.4"/><circle cx="11" cy="14" r="2.8" fill="none" stroke="#6e6e6e" stroke-width="1.5"/><path d="M13 16L15.6 18.6" stroke="#6e6e6e" stroke-width="1.5" stroke-linecap="round"/></svg><svg style="left:1826.5px;top:19px;" width="22" height="20" viewBox="0 0 22 20"><path d="M11 0.8L21 5L11 9.2L1 5Z" fill="none" stroke="#6e6e6e" stroke-width="1.5" stroke-linejoin="round"/><path d="M5 7V11.4C5 13.2 7.8 14.4 11 14.4C14.2 14.4 17 13.2 17 11.4V7" fill="none" stroke="#6e6e6e" stroke-width="1.5"/><path d="M2.6 6V15.6" stroke="#6e6e6e" stroke-width="1.4"/><circle cx="2.6" cy="17.5" r="1.8" fill="none" stroke="#6e6e6e" stroke-width="1.4"/></svg><svg style="left:1867px;top:8px;" width="40.5" height="40.5" viewBox="0 0 40.5 40.5"><defs><clipPath id="av"><circle cx="20.25" cy="20.25" r="18.4"/></clipPath></defs><circle cx="20.25" cy="20.25" r="19.6" fill="#e3e3e3"/><circle cx="20.25" cy="20.25" r="18.4" fill="#c9c9c9"/><g clip-path="url(#av)" fill="#fff"><circle cx="20.6" cy="12.8" r="7"/><path d="M6 38C6 30 9.5 25.8 15.4 24L18.8 31L20.6 27L22.4 31L25.8 24C31.7 25.8 35.2 30 35.2 38Z"/></g></svg><svg style="left:312.5px;top:148.5px;" width="14" height="13" viewBox="0 0 14 13"><path d="M13 6.5H1.6M6.6 1.2L1.2 6.5L6.6 11.8" fill="none" stroke="#5f5f5f" stroke-width="1.6" stroke-linecap="round" stroke-linejoin="round"/></svg><svg style="left:373.3px;top:152.3px;" width="14" height="9.5" viewBox="0 0 14 9.5"><path d="M5.6 0.8L1 4.8L5.6 8.8M12.6 0.8L8 4.8L12.6 8.8" fill="none" stroke="#555" stroke-width="1.4" stroke-linecap="round" stroke-linejoin="round"/></svg><svg style="left:420.7px;top:152.3px;" width="7" height="9.5" viewBox="0 0 7 9.5"><path d="M6 0.8L1.2 4.8L6 8.8" fill="none" stroke="#555" stroke-width="1.4" stroke-linecap="round" stroke-linejoin="round"/></svg><svg style="left:468.7px;top:152.3px;" width="7" height="9.5" viewBox="0 0 7 9.5"><path d="M1 0.8L5.8 4.8L1 8.8" fill="none" stroke="#b3b3b3" stroke-width="1.4" stroke-linecap="round" stroke-linejoin="round"/></svg><svg style="left:509px;top:152.3px;" width="14" height="9.5" viewBox="0 0 14 9.5"><path d="M1 0.8L5.6 4.8L1 8.8M8 0.8L12.6 4.8L8 8.8" fill="none" stroke="#b3b3b3" stroke-width="1.4" stroke-linecap="round" stroke-linejoin="round"/></svg><svg style="left:1377px;top:202.8px;" width="15" height="14" viewBox="0 0 15 14"><circle cx="6" cy="5.8" r="5" fill="none" stroke="#666" stroke-width="1.3"/><path d="M9.7 9.5L13.4 13.2" stroke="#666" stroke-width="1.3" stroke-linecap="round"/></svg><svg style="left:1377.8px;top:257.4px;" width="15" height="14" viewBox="0 0 15 14"><circle cx="6" cy="5.8" r="5" fill="none" stroke="#666" stroke-width="1.3"/><path d="M9.7 9.5L13.4 13.2" stroke="#666" stroke-width="1.3" stroke-linecap="round"/></svg><svg style="left:1379.2px;top:388px;" width="15" height="14" viewBox="0 0 15 14"><circle cx="6" cy="5.8" r="5" fill="none" stroke="#666" stroke-width="1.3"/><path d="M9.7 9.5L13.4 13.2" stroke="#666" stroke-width="1.3" stroke-linecap="round"/></svg><svg style="left:1379.2px;top:446px;" width="15" height="14" viewBox="0 0 15 14"><circle cx="6" cy="5.8" r="5" fill="none" stroke="#666" stroke-width="1.3"/><path d="M9.7 9.5L13.4 13.2" stroke="#666" stroke-width="1.3" stroke-linecap="round"/></svg><svg style="left:444px;top:504.5px;" width="15" height="14" viewBox="0 0 15 14"><circle cx="6" cy="5.8" r="5" fill="none" stroke="#666" stroke-width="1.3"/><path d="M9.7 9.5L13.4 13.2" stroke="#666" stroke-width="1.3" stroke-linecap="round"/></svg><svg style="left:626.2px;top:298.5px;" width="12" height="10" viewBox="0 0 12 10"><path d="M1.5 4.8L4.6 7.8L10.4 1.6" fill="none" stroke="#0b72e7" stroke-width="1.8" stroke-linecap="round" stroke-linejoin="round"/></svg><svg style="left:999.2px;top:298.5px;" width="12" height="10" viewBox="0 0 12 10"><path d="M1.5 4.8L4.6 7.8L10.4 1.6" fill="none" stroke="#0b72e7" stroke-width="1.8" stroke-linecap="round" stroke-linejoin="round"/></svg><svg style="left:294px;top:905.9px;" width="21.2" height="21.2" viewBox="0 0 21.2 21.2"><path d="M4 0.9H15.6L20.3 5.6V17.2A3.1 3.1 0 0 1 17.2 20.3H4A3.1 3.1 0 0 1 0.9 17.2V4A3.1 3.1 0 0 1 4 0.9Z" fill="none" stroke="#1ec08a" stroke-width="1.8" stroke-linejoin="round"/><path d="M5.2 1V3.4A2.4 2.4 0 0 0 7.6 5.8H13.6A2.4 2.4 0 0 0 16 3.4V1" fill="none" stroke="#1ec08a" stroke-width="1.8"/><circle cx="10.6" cy="12.6" r="2.6" fill="none" stroke="#1ec08a" stroke-width="1.8"/></svg><svg style="left:335.2px;top:905px;" width="21.6" height="22" viewBox="0 0 21.6 22"><circle cx="10.8" cy="11" r="9.9" fill="none" stroke="#0a6fd8" stroke-width="1.8"/><path d="M6.8 11.2L9.6 13.8L14.8 8.4" fill="none" stroke="#0a6fd8" stroke-width="1.8" stroke-linecap="round" stroke-linejoin="round"/></svg><svg style="left:376.1px;top:905px;" width="21.8" height="22" viewBox="0 0 21.8 22"><circle cx="10.9" cy="11" r="9.9" fill="none" stroke="#16263a" stroke-width="1.8"/><path d="M10.9 6.7V15.3M6.6 11H15.2" stroke="#16263a" stroke-width="1.9"/></svg><svg style="left:420.9px;top:905.9px;" width="17.3" height="21.4" viewBox="0 0 17.3 21.4"><path d="M0.8 4.4H16.5" stroke="#ff5b64" stroke-width="1.6" stroke-linecap="round"/><path d="M5.2 4.2V3.6A3.4 2.9 0 0 1 12 3.6V4.2" fill="none" stroke="#ff5b64" stroke-width="1.6"/><path d="M2.2 4.6L3.4 18A2.6 2.6 0 0 0 6 20.4H11.4A2.6 2.6 0 0 0 14 18L15.2 4.6" fill="none" stroke="#ff5b64" stroke-width="1.6"/><path d="M6.5 9.8V16M10.7 9.8V16" stroke="#ff5b64" stroke-width="1.5"/></svg><svg style="left:0;top:0" width="1914" height="944"><path d="M494.50 527.30 Q495.60 524.90 496.70 527.30 Q497.80 529.70 498.90 527.30 Q500.00 524.90 501.10 527.30 Q502.20 529.70 503.30 527.30 Q504.40 524.90 505.50 527.30 Q506.60 529.70 507.70 527.30" fill="none" stroke="#f0262b" stroke-width="1.15"/></svg><svg style="left:0;top:0" width="1914" height="944"><path d="M602.00 527.30 Q603.10 524.90 604.20 527.30 Q605.30 529.70 606.40 527.30 Q607.50 524.90 608.60 527.30 Q609.70 529.70 610.80 527.30 Q611.90 524.90 613.00 527.30 Q614.10 529.70 615.20 527.30 Q616.30 524.90 617.40 527.30 Q618.50 529.70 619.60 527.30 Q620.70 524.90 621.80 527.30 Q622.90 529.70 624.00 527.30 Q625.10 524.90 626.20 527.30 Q627.30 529.70 628.40 527.30 Q629.50 524.90 630.60 527.30 Q631.70 529.70 632.80 527.30 Q633.90 524.90 635.00 527.30" fill="none" stroke="#f0262b" stroke-width="1.15"/></svg><svg style="left:0;top:0" width="1914" height="944"><path d="M714.50 527.30 Q715.60 524.90 716.70 527.30 Q717.80 529.70 718.90 527.30 Q720.00 524.90 721.10 527.30 Q722.20 529.70 723.30 527.30 Q724.40 524.90 725.50 527.30 Q726.60 529.70 727.70 527.30 Q728.80 524.90 729.90 527.30" fill="none" stroke="#f0262b" stroke-width="1.15"/></svg><svg style="left:1864.8px;top:895px;" width="45.4" height="45" viewBox="0 0 45.4 45"><defs><clipPath id="ch"><path d="M1.5 43.5V22A21 21 0 1 1 22.7 43.5Z"/></clipPath></defs><path d="M1.2 43.8V22.2A21.5 21.5 0 1 1 22.7 43.8Z" fill="#b6e1fb" stroke="#1a7fe0" stroke-width="2"/><g clip-path="url(#ch)"><path d="M3.5 42L9.5 24C10.5 11 15 3.6 23 3.6C31 3.6 35.5 10 36 20L37.2 37L30 43Z" fill="#4b2a20"/><ellipse cx="24" cy="21.8" rx="10" ry="13" fill="#dba58c"/><path d="M14 16C15 10 19 8 24 8C29 8 33 10.5 34.5 15.5C31 11.6 26 10.8 22 11.4C18 12 15.6 13.6 14 16Z" fill="#4b2a20"/><g fill="#e7b7a2" stroke="#5b4a44" stroke-width="1"><ellipse cx="18.2" cy="20" rx="4" ry="3.4"/><ellipse cx="29" cy="19.2" rx="4" ry="3.4"/></g><path d="M22.2 19.6H25" stroke="#5b4a44" stroke-width="1"/><path d="M19.8 26.2Q24 24.6 28.2 26.2Q27 29.6 24 29.6Q21 29.6 19.8 26.2Z" fill="#c9574a"/><path d="M20.6 26.3Q24 25.4 27.4 26.3L27 27.3Q24 26.6 21 27.3Z" fill="#fff"/><path d="M2 47L8 40C11 38 14.5 37 17 36.6L21.5 39.5L27 37.2C30 37.8 33.5 38.5 37 40L40 47Z" fill="#dcdcdc"/></g></svg></body></html>
